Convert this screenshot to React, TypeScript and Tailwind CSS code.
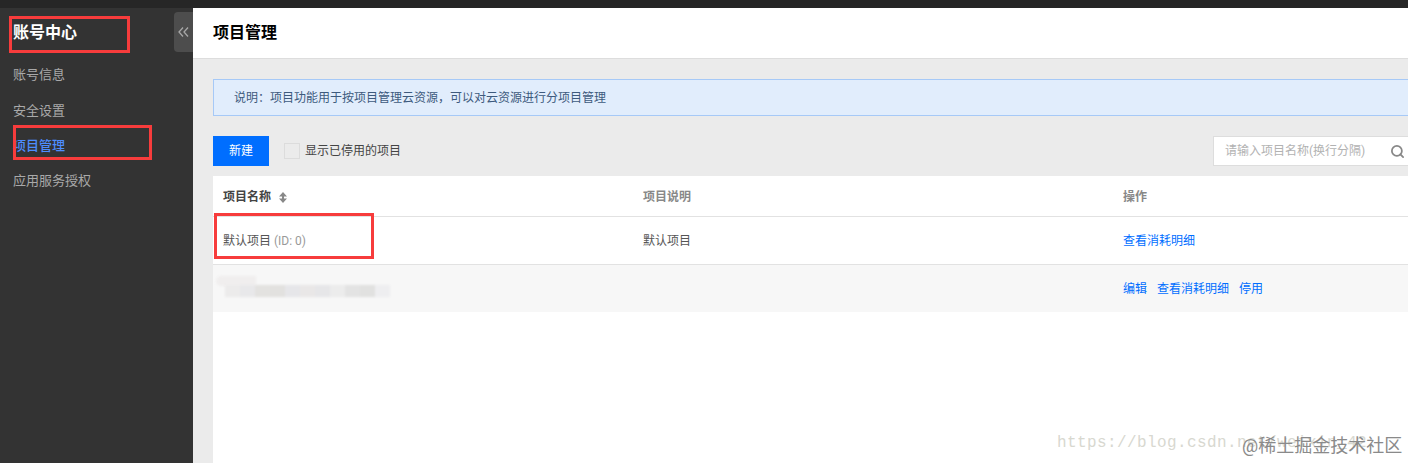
import { Search } from "lucide-react";

const font = "font-['Roboto','Noto_Sans_CJK_SC',sans-serif]";

const mosaic = ["#ecebeb", "#e8e8ea", "#e3e2e0", "#e2e1df", "#e6e6e9", "#e9e7e7", "#e6e6e8", "#ececec", "#e3e3e3", "#e1e1e0", "#eeeef0"];

function Annotation({ className }: { className: string }) {
  return <div className={`absolute border-[3px] border-[#f73c3c] pointer-events-none ${className}`} />;
}

function SortIcon() {
  return (
    <svg width="8" height="11" viewBox="0 0 8 11" className="ml-2">
      <path d="M4 0 8 4.5H0Z M0 6.5h8L4 11Z M3 3h2v5H3Z" fill="#888" />
    </svg>
  );
}

function Sidebar() {
  return (
    <aside className="relative w-[193px] shrink-0 bg-[#333333]">
      <div className="pl-[13px] pt-[15px] h-[50px] text-base leading-5 font-bold text-white">账号中心</div>
      <nav className="flex flex-col text-[13px] text-[#a9a9a9]">
        <a className="h-[36px] pl-[13px] leading-[33px]">账号信息</a>
        <a className="h-[35px] pl-[13px] leading-[33px]">安全设置</a>
        <a className="h-[35px] pl-[13px] leading-[33px] font-medium text-[#4d8dff]">项目管理</a>
        <a className="h-[35px] pl-[13px] leading-[33px]">应用服务授权</a>
      </nav>
      <button className="absolute right-0 top-[4px] flex h-[40px] w-[19px] items-center justify-center rounded-l-sm bg-[#4d4d4d] text-[#a8a8a8]">
        <svg width="11" height="10" viewBox="0 0 11 10" fill="none" stroke="currentColor" strokeWidth="1.3">
          <path d="M5 0.5 1 5l4 4.5M10 0.5 6 5l4 4.5" />
        </svg>
      </button>
    </aside>
  );
}

function Toolbar() {
  return (
    <div className="mt-5 flex h-[30px] items-center">
      <button className="h-[30px] w-[56px] bg-[#006eff] text-xs text-white">新建</button>
      <span className="ml-[15px] h-4 w-4 border border-[#dcdcdc] bg-[#ebebeb]" />
      <span className="ml-[5px] text-xs text-[#444]">显示已停用的项目</span>
      <div className="ml-auto flex h-[30px] w-[195px] shrink-0 items-center border border-r-0 border-[#dddddd] bg-white pl-[11px] pr-[3px]">
        <span className="flex-1 text-xs text-[#b2b2b2]">请输入项目名称(换行分隔)</span>
        <Search size={15} strokeWidth={2.8} className="text-[#888]" />
      </div>
    </div>
  );
}

function ProjectTable() {
  const cols = "grid grid-cols-[420px_480px_1fr] pl-[10px]";
  return (
    <div className="mt-[10px] flex-1 bg-white text-xs">
      <div className={`${cols} h-[41px] items-center border-b border-[#e2e2e2] pt-[2px] font-bold text-[#666]`}>
        <div className="flex items-center text-[#444]">
          项目名称
          <SortIcon />
        </div>
        <div className="text-[#888]">项目说明</div>
        <div className="text-[#888]">操作</div>
      </div>
      <div className={`${cols} h-[48px] items-center border-b border-[#e2e2e2] text-[#555]`}>
        <div>
          默认项目 <span className="text-[#999]">(ID: 0)</span>
        </div>
        <div>默认项目</div>
        <a className="text-[#006eff]">查看消耗明细</a>
      </div>
      <div className={`${cols} relative h-[47px] items-center bg-[#f7f7f7] text-[#006eff]`}>
        {/* blurred-out project name */}
        <div className="absolute left-[3px] top-[11px] h-[10px] w-[40px] rounded-l-full bg-[#f0eeee] blur-[1px]" />
        <div className="absolute left-[12px] top-[20px] flex h-[12px] w-[165px] blur-[1px]">
          {mosaic.map((c, i) => (
            <div key={i} className="flex-1" style={{ backgroundColor: c }} />
          ))}
        </div>
        <div />
        <div />
        <div className="flex gap-[10px]">
          <a>编辑</a>
          <a>查看消耗明细</a>
          <a>停用</a>
        </div>
      </div>
    </div>
  );
}

export default function App() {
  return (
    <div className={`relative flex h-[463px] w-[1408px] flex-col overflow-hidden ${font}`}>
      <div className="h-2 shrink-0 bg-[#262626]" />
      <div className="flex min-h-0 flex-1">
        <Sidebar />
        <main className="flex min-w-0 flex-1 flex-col bg-[#ebebeb]">
          <header className="flex h-[51px] shrink-0 items-center border-b border-[#dddddd] bg-white pb-0 pl-5 text-base font-bold text-black">
            项目管理
          </header>
          <div className="flex min-h-0 flex-1 flex-col pl-5 pt-5">
            <div className="flex h-[37px] shrink-0 items-center border border-r-0 border-[#a6c9f7] bg-[#e1edfc] pl-5 text-xs text-[#3d5a7d]">
              说明：项目功能用于按项目管理云资源，可以对云资源进行分项目管理
            </div>
            <Toolbar />
            <ProjectTable />
          </div>
        </main>
      </div>

      <Annotation className="left-[9px] top-[16px] h-[37px] w-[121px]" />
      <Annotation className="left-[13px] top-[125px] h-[35px] w-[139px]" />
      <Annotation className="left-[214px] top-[213px] h-[46px] w-[160px]" />

      <div className="absolute left-[1057px] top-[431px] font-['Liberation_Mono',monospace] text-[16px] leading-6 tracking-[0.4px] whitespace-nowrap text-[#d8d8d0]">
        https://blog.csdn.net/weixin_42
      </div>
      <div className="absolute left-[1242px] top-[436px] text-[18px] leading-5 whitespace-nowrap text-[#8a8a8a]">
        @稀土掘金技术社区
      </div>
    </div>
  );
}
